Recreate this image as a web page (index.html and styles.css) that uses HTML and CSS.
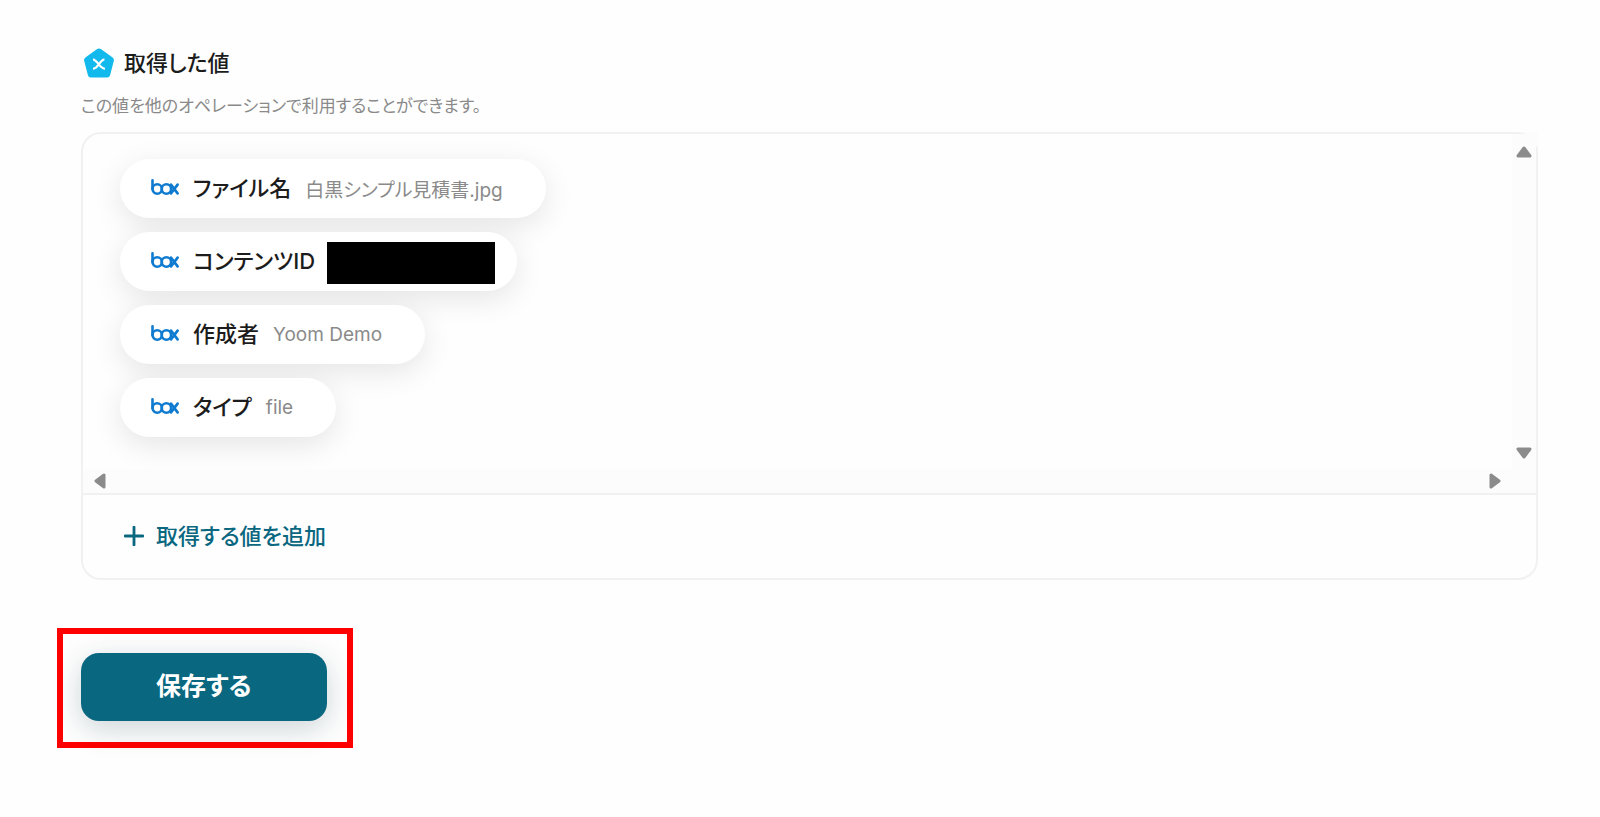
FILE: index.html
```html
<!DOCTYPE html>
<html lang="ja">
<head>
<meta charset="utf-8">
<title>取得した値</title>
<link rel="stylesheet" href="styles.css">
</head>
<body>
<svg class="defs" aria-hidden="true">
  <symbol id="box-logo" viewBox="0 0 28 16">
    <g fill="none" stroke="#0f7bd0" stroke-width="2.6" stroke-linecap="round">
      <path d="M1.5 1.4V10"/>
      <circle cx="6.2" cy="10" r="4.7"/>
      <circle cx="15.4" cy="10" r="4.7"/>
      <path d="M20 5.6L26.6 14.4M26.6 5.6L20 14.4"/>
    </g>
  </symbol>
</svg>
<main class="page">
  <header class="heading">
    <svg class="heading-icon" viewBox="0 0 30 30" aria-hidden="true">
      <path d="M12.8 1.2Q15 -.4 17.2 1.2L28.6 9.4Q30.4 10.8 29.8 13L26 27.4Q25.4 29.4 23.2 29.4H6.8Q4.6 29.4 4 27.4L.2 13Q-.4 10.8 1.4 9.4Z" fill="#12b9ec"/>
      <path d="M9 11.6C13.2 11.2 15.6 21.2 21 20.6M20.4 11.6C16 11.2 14 21.2 9 20.6" fill="none" stroke="#fff" stroke-width="2.2"/>
    </svg>
    <h1 class="title">取得した値</h1>
  </header>
  <p class="description">この値を他のオペレーションで利用することができます。</p>

  <section class="panel">
    <div class="viewport">
      <ul class="chips">
        <li class="chip"><svg class="logo" role="img" aria-label="box"><use href="#box-logo"/></svg><span class="label">ファイル名</span><span class="value">白黒シンプル見積書.jpg</span></li>
        <li class="chip chip-masked"><svg class="logo" role="img" aria-label="box"><use href="#box-logo"/></svg><span class="label">コンテンツID</span><span class="mask"></span></li>
        <li class="chip"><svg class="logo" role="img" aria-label="box"><use href="#box-logo"/></svg><span class="label">作成者</span><span class="value">Yoom Demo</span></li>
        <li class="chip"><svg class="logo" role="img" aria-label="box"><use href="#box-logo"/></svg><span class="label">タイプ</span><span class="value">file</span></li>
      </ul>
      <div class="track track-y">
        <button class="arrow" type="button" aria-label="上へスクロール"><svg viewBox="0 0 16 12" width="16" height="12"><path d="M8 2L14 10H2Z"/></svg></button>
        <button class="arrow" type="button" aria-label="下へスクロール"><svg viewBox="0 0 16 12" width="16" height="12"><path d="M8 10L2 2H14Z"/></svg></button>
      </div>
      <div class="track track-x">
        <button class="arrow" type="button" aria-label="左へスクロール"><svg viewBox="0 0 12 16" width="12" height="16"><path d="M2 8L10 2V14Z"/></svg></button>
        <button class="arrow" type="button" aria-label="右へスクロール"><svg viewBox="0 0 12 16" width="12" height="16"><path d="M10 8L2 14V2Z"/></svg></button>
      </div>
      <div class="track"></div>
    </div>
    <div class="footer">
      <button class="add" type="button">
        <svg viewBox="0 0 20 20" width="20" height="20" aria-hidden="true"><path d="M10 1V19M1 10H19" fill="none" stroke="#0a6780" stroke-width="2.8" stroke-linecap="round"/></svg>
        取得する値を追加
      </button>
    </div>
  </section>

  <div class="highlight">
    <button class="save" type="button">保存する</button>
  </div>
</main>
</body>
</html>
```
FILE: styles.css
```css
* {
  box-sizing: border-box;
}

body {
  margin: 0;
  background: #fefefe;
  color: #1c1c1c;
  font-family: Inter, "Noto Sans CJK JP", sans-serif;
  font-feature-settings: "palt";
}

button {
  border: 0;
  padding: 0;
  background: none;
  font: inherit;
  font-feature-settings: inherit;
  cursor: pointer;
}

.defs {
  display: none;
}

.page {
  padding: 47px 62px 47px 81px;
}

.heading {
  display: flex;
  align-items: center;
  gap: 10px;
  height: 32px;
  padding-left: 3px;
}

.heading-icon {
  width: 30px;
  height: 30px;
}

.title {
  margin: 0;
  font-size: 22px;
  font-weight: 500;
  line-height: 30px;
}

.description {
  margin: 15px 0 14px;
  color: #8a8a8a;
  font-size: 17px;
  line-height: 24px;
}

.panel {
  position: relative;
  border: 2px solid #f1f1f1;
  border-radius: 20px;
}

/* The scrollbar gutter is square and covers the rounded corner. */
.panel::before {
  content: "";
  position: absolute;
  top: -2px;
  right: -2px;
  width: 14px;
  height: 14px;
  background: #fcfcfc;
}

.viewport {
  display: grid;
  grid-template-columns: 1fr 24px;
  grid-template-rows: auto 24px;
}

.chips {
  display: flex;
  flex-direction: column;
  align-items: flex-start;
  gap: 14px;
  margin: 0;
  padding: 25px 37px 32px;
  list-style: none;
}

.chip {
  display: flex;
  align-items: center;
  height: 59px;
  padding: 0 43px 0 31px;
  border-radius: 30px;
  background: #fff;
  box-shadow: 0 8px 30px rgba(0, 0, 0, 0.1);
  white-space: nowrap;
}

.chip-masked {
  padding-right: 22px;
}

.logo {
  width: 28px;
  height: 16px;
  margin: 0 14px 3px 0;
}

.label {
  padding-bottom: 6px;
  font-size: 22px;
  font-weight: 500;
}

.value {
  margin-left: 14px;
  color: #8a8a8a;
  font-size: 19px;
}

.mask {
  width: 168px;
  height: 42px;
  margin: 2px 0 0 12px;
  background: #000;
}

.track {
  display: flex;
  align-items: center;
  justify-content: space-between;
  background: #fcfcfc;
}

.track-y {
  flex-direction: column;
  padding: 12px 0 10px;
}

.track-x {
  padding: 0 11px;
}

.arrow {
  display: flex;
}

.arrow path {
  fill: #8b8b8b;
  stroke: #8b8b8b;
  stroke-width: 3;
  stroke-linejoin: round;
}

.footer {
  padding: 24px 41px 25px;
  border-top: 2px solid #f1f1f1;
}

.add {
  display: flex;
  align-items: center;
  gap: 12px;
  color: #0a6780;
  font-size: 22px;
  font-weight: 500;
  line-height: 34px;
}

.highlight {
  width: fit-content;
  margin: 48px 0 0 -24px;
  padding: 19px 20px 21px 18px;
  border: 6px solid #f00;
}

.save {
  display: block;
  padding: 15px 75px 17px;
  border-radius: 18px;
  background: #0a6780;
  box-shadow: 0 8px 30px rgba(10, 50, 65, 0.2);
  color: #fff;
  font-size: 25px;
  font-weight: 700;
  line-height: 36px;
}
```
